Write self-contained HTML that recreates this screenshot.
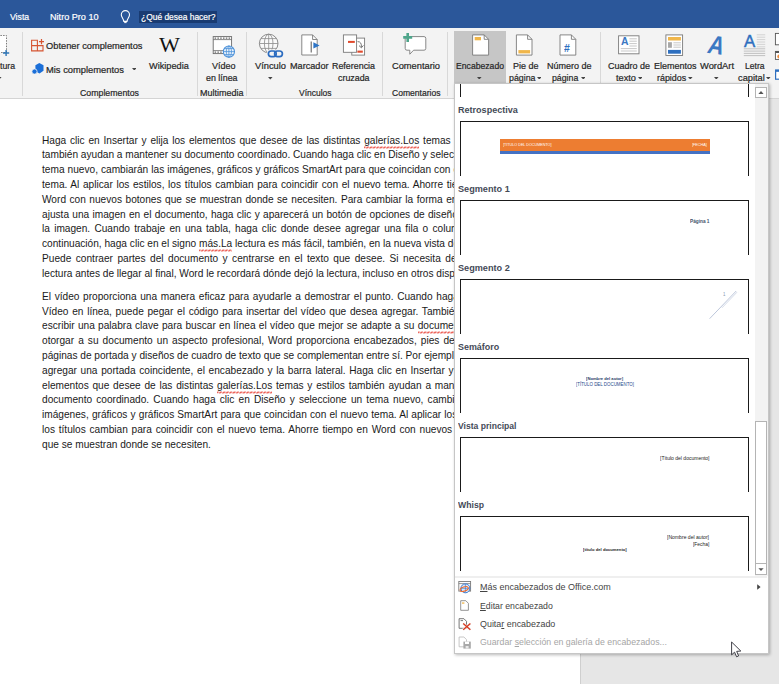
<!DOCTYPE html>
<html lang="es"><head><meta charset="utf-8"><title>Word</title>
<style>
html,body{margin:0;padding:0}
body{width:779px;height:684px;overflow:hidden;position:relative;background:#e6e6e6;font-family:"Liberation Sans",sans-serif}
.l{-webkit-text-stroke:0.2px currentColor;position:absolute;white-space:nowrap;line-height:12px;transform-origin:0 50%;display:block}
.abs{position:absolute}
#top{position:absolute;left:0;top:0;width:779px;height:28px;background:#2b579a}
#ribbon{position:absolute;left:0;top:28px;width:779px;height:70px;background:#f3f3f3;border-bottom:1px solid #d4d4d4}
.sep{position:absolute;width:1px;background:#d8d8d8;top:32px;height:64px}
#page{position:absolute;left:0;top:99px;width:580px;height:585px;background:#fff;border-right:1px solid #cfcfcf}
.ln{position:absolute;left:42px;white-space:nowrap;font-size:10.15px;line-height:14px;color:#1a1a1a;text-align:justify;text-align-last:justify;width:450px}
.ln.last{text-align:left;text-align-last:left}
.sq{position:relative;display:inline-block}.sq svg{position:absolute;left:0;top:12px;width:100%;height:3px;overflow:hidden}
#dd{position:absolute;left:454px;top:83px;width:313px;height:569px;background:#fff;border:1px solid #c6c6c6;box-shadow:1px 1px 3px rgba(0,0,0,.28)}
.it{position:absolute;left:5px;width:289px;height:55px;border:1px solid #1a1a1a;border-bottom:none;box-sizing:border-box}
.hd{position:absolute;left:4px;font-size:10.5px;font-weight:bold;color:#44546a;line-height:12px;white-space:nowrap;transform-origin:0 50%}
</style></head><body>

<svg width="0" height="0" style="position:absolute"><defs><pattern id="sqp" width="3.4" height="3" patternUnits="userSpaceOnUse"><path d="M0 2.5L0.85 0.5L2.55 2.5L3.4 0.5" fill="none" stroke="#e8392d" stroke-width="0.75"/></pattern></defs></svg>
<div id="top"></div>
<div class="abs" style="left:139px;top:11px;width:78px;height:12px;background:#193b72"></div>
<span class="l" style="left:10.2px;top:11.18px;font-size:9px;color:#ffffff;transform:scaleX(0.9625);">Vista</span>
<span class="l" style="left:50.0px;top:11.18px;font-size:9px;color:#ffffff;transform:scaleX(1.0122);">Nitro Pro 10</span>
<span class="l" style="left:140.5px;top:11.18px;font-size:9px;color:#ffffff;transform:scaleX(0.9366);">¿Qué desea hacer?</span>
<div id="ribbon"></div>
<div class="sep" style="left:22px"></div>
<div class="sep" style="left:197px"></div>
<div class="sep" style="left:246px"></div>
<div class="sep" style="left:382px"></div>
<div class="sep" style="left:447px"></div>
<div class="sep" style="left:600px"></div>
<div class="abs" style="left:454px;top:31px;width:52px;height:53px;background:#c6c6c6"></div>
<span class="l" style="left:-0.5px;top:59.58px;font-size:9px;color:#262626;transform:scaleX(0.9673);">tura</span>
<span class="l" style="left:46.0px;top:40.18px;font-size:9px;color:#262626;transform:scaleX(1.0316);">Obtener complementos</span>
<span class="l" style="left:46.0px;top:63.58px;font-size:9px;color:#262626;transform:scaleX(1.0397);">Mis complementos</span>
<span class="l" style="left:149.4px;top:59.88px;font-size:9px;color:#262626;transform:scaleX(1.0202);">Wikipedia</span>
<span class="l" style="left:80.0px;top:86.78px;font-size:9px;color:#262626;transform:scaleX(0.9748);">Complementos</span>
<span class="l" style="left:211.5px;top:59.58px;font-size:9px;color:#262626;transform:scaleX(0.9992);">Vídeo</span>
<span class="l" style="left:206.0px;top:71.98px;font-size:9px;color:#262626;transform:scaleX(0.9836);">en línea</span>
<span class="l" style="left:200.0px;top:86.78px;font-size:9px;color:#262626;transform:scaleX(0.9997);">Multimedia</span>
<span class="l" style="left:255.0px;top:59.58px;font-size:9px;color:#262626;transform:scaleX(1.0327);">Vínculo</span>
<span class="l" style="left:290.0px;top:59.58px;font-size:9px;color:#262626;transform:scaleX(1.0129);">Marcador</span>
<span class="l" style="left:332.0px;top:59.58px;font-size:9px;color:#262626;transform:scaleX(0.9880);">Referencia</span>
<span class="l" style="left:337.5px;top:71.98px;font-size:9px;color:#262626;transform:scaleX(0.9839);">cruzada</span>
<span class="l" style="left:298.5px;top:86.78px;font-size:9px;color:#262626;transform:scaleX(0.9415);">Vínculos</span>
<span class="l" style="left:391.5px;top:59.58px;font-size:9px;color:#262626;transform:scaleX(1.0319);">Comentario</span>
<span class="l" style="left:391.5px;top:86.78px;font-size:9px;color:#262626;transform:scaleX(0.9507);">Comentarios</span>
<span class="l" style="left:456.0px;top:59.58px;font-size:9px;color:#262626;transform:scaleX(0.9593);">Encabezado</span>
<span class="l" style="left:512.5px;top:59.58px;font-size:9px;color:#262626;transform:scaleX(0.9993);">Pie de</span>
<span class="l" style="left:508.5px;top:71.98px;font-size:9px;color:#262626;transform:scaleX(0.9806);">página</span>
<span class="l" style="left:546.5px;top:59.58px;font-size:9px;color:#262626;transform:scaleX(0.9996);">Número de</span>
<span class="l" style="left:552.0px;top:71.98px;font-size:9px;color:#262626;transform:scaleX(0.9732);">página</span>
<span class="l" style="left:608.0px;top:59.58px;font-size:9px;color:#262626;transform:scaleX(0.9994);">Cuadro de</span>
<span class="l" style="left:616.0px;top:71.98px;font-size:9px;color:#262626;transform:scaleX(1.0251);">texto</span>
<span class="l" style="left:653.5px;top:59.58px;font-size:9px;color:#262626;transform:scaleX(0.9995);">Elementos</span>
<span class="l" style="left:656.8px;top:71.98px;font-size:9px;color:#262626;transform:scaleX(0.9893);">rápidos</span>
<span class="l" style="left:700.0px;top:59.58px;font-size:9px;color:#262626;transform:scaleX(1.0354);">WordArt</span>
<span class="l" style="left:744.8px;top:59.58px;font-size:9px;color:#262626;transform:scaleX(0.9507);">Letra</span>
<span class="l" style="left:738.0px;top:71.98px;font-size:9px;color:#262626;transform:scaleX(1.0302);">capital</span>
<svg class="abs" style="left:0;top:0" width="779" height="100" viewBox="0 0 779 100" fill="none">
<rect x="-5" y="35.5" width="11.5" height="17" fill="#fff" stroke="#7a7a7a" stroke-width="1" stroke-dasharray="1.5 1.2"/>
<path d="M3 53H9.2M6.1 50V56" stroke="#2e75b6" stroke-width="1.4"/>
<path d="M31.6 40.2H37.4V50.9H31.6ZM31.6 45.6H43V50.9H37.4M43 45.6V50.9" stroke="#d65532" stroke-width="1.1"/>
<path d="M39 41.6H44M41.5 39V44.2" stroke="#d65532" stroke-width="1.2"/>
<path d="M39.3 63.1L43.5 65.2V70.8L39.5 73.4L35.4 71.3V65.3Z" fill="#1b6fd8"/>
<circle cx="34.5" cy="71.5" r="2.6" fill="#1b6fd8" stroke="#f3f3f3" stroke-width="0.8"/>
<rect x="213.2" y="36.6" width="18.4" height="17" fill="#fff" stroke="#6a6a6a" stroke-width="0.9"/>
<path d="M213.2 39.6H231.6M213.2 50.6H231.6" stroke="#6a6a6a" stroke-width="0.8"/>
<path d="M214.6 38.1H231M214.6 52.1H224" stroke="#6a6a6a" stroke-width="1.4" stroke-dasharray="1.5 1.3"/>
<circle cx="228.9" cy="51.6" r="5.6" fill="#eaf2fb" stroke="#4a90d9" stroke-width="1.1"/>
<path d="M223.3 51.6H234.5M228.9 46V57.2M224.3 48.6H233.5M224.3 54.6H233.5" stroke="#4a90d9" stroke-width="0.8"/>
<ellipse cx="228.9" cy="51.6" rx="2.6" ry="5.6" stroke="#4a90d9" stroke-width="0.8"/>
<circle cx="268.7" cy="43.5" r="9.3" fill="#fafafa" stroke="#8a8a8a" stroke-width="1"/>
<ellipse cx="268.7" cy="43.5" rx="4.3" ry="9.3" stroke="#8a8a8a" stroke-width="0.8"/>
<path d="M259.4 43.5H278M268.7 34.2V52.8M261 38.6H276.4M261 48.4H276.4" stroke="#8a8a8a" stroke-width="0.8"/>
<rect x="266.5" y="49.4" width="17.5" height="8.8" rx="4.4" fill="#f3f3f3"/>
<rect x="268.4" y="51" width="7.8" height="5.6" rx="2.8" stroke="#2b6cc0" stroke-width="1.7"/>
<rect x="274.6" y="51" width="7.8" height="5.6" rx="2.8" stroke="#2b6cc0" stroke-width="1.7"/>
<path d="M301.8 34.9H312.6L317.2 39.5V55H301.8Z" fill="#fff" stroke="#7a7a7a" stroke-width="0.9"/>
<path d="M312.6 34.9V39.5H317.2" stroke="#7a7a7a" stroke-width="0.9"/>
<path d="M311.2 41.5V52.5" stroke="#555" stroke-width="1"/>
<path d="M313.4 42.2L319.6 45.4L313.4 48.6Z" fill="#2e75c6"/>
<rect x="351.8" y="38.1" width="12.8" height="17" fill="#fff" stroke="#7a7a7a" stroke-width="0.9"/>
<rect x="343.4" y="34.9" width="13.2" height="17.4" fill="#fff" stroke="#7a7a7a" stroke-width="0.9"/>
<rect x="348" y="40.9" width="6.8" height="2" fill="#e0492b"/>
<rect x="357.4" y="50.6" width="5.4" height="2.1" fill="#e0492b"/>
<path d="M357.6 41.6C360.6 41.6 361.6 43.6 361.4 47.2M359 45.6L361.4 47.8L363.4 45.4" stroke="#666" stroke-width="0.9"/>
<path d="M407 36.6H424A1.8 1.8 0 0 1 425.8 38.4V48.4A1.8 1.8 0 0 1 424 50.2H413.6L409.8 54.2V50.2H407A1.8 1.8 0 0 1 405.2 48.4V38.4A1.8 1.8 0 0 1 407 36.6Z" fill="#fff" stroke="#7a7a7a" stroke-width="0.9"/>
<path d="M403.2 37.4H412.2M407.7 32.9V41.9" stroke="#4ea58a" stroke-width="2.6"/>
<path d="M472.6 34.9H484.20000000000005L488.6 39.3V55.1H472.6Z" fill="#fff" stroke="#7a7a7a" stroke-width="0.9"/><path d="M484.20000000000005 34.9V39.3H488.6" stroke="#7a7a7a" stroke-width="0.9"/>
<rect x="474.7" y="37" width="6.3" height="3.3" fill="#f0b64a"/>
<path d="M516.4 34.9H527.6L532 39.3V55.1H516.4Z" fill="#fff" stroke="#7a7a7a" stroke-width="0.9"/><path d="M527.6 34.9V39.3H532" stroke="#7a7a7a" stroke-width="0.9"/>
<rect x="518.4" y="50.1" width="11.7" height="3.3" fill="#f0b64a"/>
<path d="M560 34.9H571.4L575.8 39.3V55.1H560Z" fill="#fff" stroke="#7a7a7a" stroke-width="0.9"/><path d="M571.4 34.9V39.3H575.8" stroke="#7a7a7a" stroke-width="0.9"/>
<rect x="618.6" y="35.8" width="20.4" height="18" fill="#fff" stroke="#7a7a7a" stroke-width="0.9"/>
<path d="M629.4 38.8H636.8M629.4 41.2H636.8M629.4 43.6H636.8M629.4 46H636.8M620.8 48.6H636.8M620.8 51H636.8" stroke="#b9b9b9" stroke-width="0.8"/>
<rect x="665.9" y="34.9" width="16.7" height="20.6" fill="#fff" stroke="#7a7a7a" stroke-width="0.9"/>
<rect x="668" y="37" width="12.9" height="3.5" fill="#f0b64a"/>
<rect x="668" y="42.2" width="3.9" height="5.6" fill="#a8a8a8"/>
<path d="M673.4 42.8H680.9M673.4 45H680.9M673.4 47.2H680.9" stroke="#b9b9b9" stroke-width="0.8"/>
<rect x="668" y="49.9" width="12.9" height="3.8" fill="#2e6fbf"/>
<path d="M756.8 34.8H765.2M756.8 37.2H765.2M756.8 39.6H765.2M756.8 42H765.2M756.8 44.4H765.2M756.8 46.8H765.2" stroke="#cfcfcf" stroke-width="0.9"/>
<path d="M743.8 48.8H765.2M743.8 51.1H765.2M743.8 53.4H765.2M743.8 55.6H765.2" stroke="#b4b4b4" stroke-width="0.8"/>
<rect x="775.4" y="33.4" width="8" height="11.4" fill="#fff" stroke="#555" stroke-width="0.9"/>
<rect x="775.4" y="51.4" width="8" height="8" fill="#fff" stroke="#555" stroke-width="0.9"/>
<rect x="775.4" y="51" width="8" height="2" fill="#555"/>
<circle cx="779.3" cy="56.6" r="2" fill="#ee8a3a"/>
<rect x="775.6" y="70.6" width="8" height="8.6" fill="#fff" stroke="#2e6fbf" stroke-width="1.2"/>
<rect x="775" y="69.4" width="8" height="2.4" fill="#2e6fbf"/>
</svg>
<svg class="abs" style="left:118px;top:8px" width="16" height="18" viewBox="118 8 16 18" fill="none"><path d="M125.4 10.6A4.1 4.1 0 0 1 129.5 14.7C129.5 17 127.6 18.2 127 21.4H123.8C123.2 18.2 121.3 17 121.3 14.7A4.1 4.1 0 0 1 125.4 10.6Z" stroke="#fff" stroke-width="1.1"/><path d="M124.2 22.6H126.6" stroke="#fff" stroke-width="1"/></svg>
<span class="abs" style="left:563.6px;top:42px;font-size:11px;line-height:12px;font-weight:bold;color:#2e6fbf;transform:scale(.95,1);transform-origin:0 50%">#</span>
<span class="abs" style="left:621px;top:35.6px;font-size:10.4px;line-height:12px;font-weight:bold;color:#3b78c3">A</span>
<span class="abs" style="left:743.9px;top:33.2px;font-size:16.8px;line-height:18px;color:#2e6fbf;-webkit-text-stroke:0.45px #2e6fbf">A</span>
<span class="abs" style="left:706.5px;top:30.4px;font-size:26px;line-height:30px;font-style:italic;font-weight:bold;color:#3b78c3;transform:rotate(8deg) scale(.84,1);transform-origin:50% 50%">A</span>
<span class="abs" style="left:158.6px;top:33.2px;font-family:'Liberation Serif',serif;font-size:20.5px;line-height:24px;color:#111;transform:scaleX(1.08);transform-origin:0 50%">W</span>
<svg class="abs" style="left:131.5px;top:67.7px" width="4.6" height="2.6" viewBox="0 0 4.6 2.6"><path d="M0 0H4.6L2.3 2.6Z" fill="#444"/></svg>
<svg class="abs" style="left:268.2px;top:77.2px" width="4.6" height="2.6" viewBox="0 0 4.6 2.6"><path d="M0 0H4.6L2.3 2.6Z" fill="#444"/></svg>
<svg class="abs" style="left:-2.8px;top:76.5px" width="4.6" height="2.6" viewBox="0 0 4.6 2.6"><path d="M0 0H4.6L2.3 2.6Z" fill="#444"/></svg>
<svg class="abs" style="left:477.3px;top:76.7px" width="4.6" height="2.6" viewBox="0 0 4.6 2.6"><path d="M0 0H4.6L2.3 2.6Z" fill="#444"/></svg>
<svg class="abs" style="left:536.7px;top:76.9px" width="4.6" height="2.6" viewBox="0 0 4.6 2.6"><path d="M0 0H4.6L2.3 2.6Z" fill="#444"/></svg>
<svg class="abs" style="left:580.5px;top:76.9px" width="4.6" height="2.6" viewBox="0 0 4.6 2.6"><path d="M0 0H4.6L2.3 2.6Z" fill="#444"/></svg>
<svg class="abs" style="left:637.5px;top:76.9px" width="4.6" height="2.6" viewBox="0 0 4.6 2.6"><path d="M0 0H4.6L2.3 2.6Z" fill="#444"/></svg>
<svg class="abs" style="left:688.0px;top:76.9px" width="4.6" height="2.6" viewBox="0 0 4.6 2.6"><path d="M0 0H4.6L2.3 2.6Z" fill="#444"/></svg>
<svg class="abs" style="left:714.1px;top:76.9px" width="4.6" height="2.6" viewBox="0 0 4.6 2.6"><path d="M0 0H4.6L2.3 2.6Z" fill="#444"/></svg>
<svg class="abs" style="left:766.3px;top:76.9px" width="4.6" height="2.6" viewBox="0 0 4.6 2.6"><path d="M0 0H4.6L2.3 2.6Z" fill="#444"/></svg>
<div id="page"></div>
<div class="ln" style="top:133.60px">Haga clic en Insertar y elija los elementos que desee de las distintas <span class=sq>galerías.Los<svg><rect width='100%' height='3' fill='url(#sqp)'/></svg></span> temas y estilos</div>
<div class="ln" style="top:148.41px">también ayudan a mantener su documento coordinado. Cuando haga clic en Diseño y seleccione un</div>
<div class="ln" style="top:163.22px">tema nuevo, cambiarán las imágenes, gráficos y gráficos SmartArt para que coincidan con el nuevo</div>
<div class="ln" style="top:178.03px">tema. Al aplicar los estilos, los títulos cambian para coincidir con el nuevo tema. Ahorre tiempo en</div>
<div class="ln" style="top:192.84px">Word con nuevos botones que se muestran donde se necesiten. Para cambiar la forma en que se</div>
<div class="ln" style="top:207.65px">ajusta una imagen en el documento, haga clic y aparecerá un botón de opciones de diseño junto a</div>
<div class="ln" style="top:222.46px">la imagen. Cuando trabaje en una tabla, haga clic donde desee agregar una fila o columna y, a</div>
<div class="ln" style="top:237.27px">continuación, haga clic en el signo <span class=sq>más.La<svg><rect width='100%' height='3' fill='url(#sqp)'/></svg></span> lectura es más fácil, también, en la nueva vista de lectura.</div>
<div class="ln" style="top:252.08px">Puede contraer partes del documento y centrarse en el texto que desee. Si necesita detener la</div>
<div class="ln last" style="top:266.89px">lectura antes de llegar al final, Word le recordará dónde dejó la lectura, incluso en otros dispositivos.</div>
<div class="ln" style="top:289.70px">El vídeo proporciona una manera eficaz para ayudarle a demostrar el punto. Cuando haga clic en</div>
<div class="ln" style="top:304.51px">Vídeo en línea, puede pegar el código para insertar del vídeo que desea agregar. También puede</div>
<div class="ln" style="top:319.32px">escribir una palabra clave para buscar en línea el vídeo que mejor se adapte a su <span class=sq>documento.Para<svg><rect width='100%' height='3' fill='url(#sqp)'/></svg></span></div>
<div class="ln" style="top:334.13px">otorgar a su documento un aspecto profesional, Word proporciona encabezados, pies de página,</div>
<div class="ln" style="top:348.94px">páginas de portada y diseños de cuadro de texto que se complementan entre sí. Por ejemplo, puede</div>
<div class="ln" style="top:363.75px">agregar una portada coincidente, el encabezado y la barra lateral. Haga clic en Insertar y elija los</div>
<div class="ln" style="top:378.56px">elementos que desee de las distintas <span class=sq>galerías.Los<svg><rect width='100%' height='3' fill='url(#sqp)'/></svg></span> temas y estilos también ayudan a mantener su</div>
<div class="ln" style="top:393.37px">documento coordinado. Cuando haga clic en Diseño y seleccione un tema nuevo, cambiarán las</div>
<div class="ln" style="top:408.18px">imágenes, gráficos y gráficos SmartArt para que coincidan con el nuevo tema. Al aplicar los estilos,</div>
<div class="ln" style="top:422.99px">los títulos cambian para coincidir con el nuevo tema. Ahorre tiempo en Word con nuevos botones</div>
<div class="ln last" style="top:437.80px">que se muestran donde se necesiten.</div>
<div id="dd"></div>
<div class="abs" style="left:460px;top:84px;width:1px;height:13px;background:#1a1a1a"></div>
<div class="abs" style="left:748px;top:84px;width:1px;height:13px;background:#1a1a1a"></div>
<span class="l" style="left:457.8px;top:103.68px;font-size:9px;color:#444a57;font-weight:bold;transform:scaleX(1.0047);-webkit-text-stroke:0;">Retrospectiva</span>
<div class="abs" style="left:460px;top:121px;width:289px;height:55px;border:1px solid #1a1a1a;border-bottom:none;box-sizing:border-box"></div>
<span class="l" style="left:457.8px;top:182.68px;font-size:9px;color:#444a57;font-weight:bold;transform:scaleX(1.0135);-webkit-text-stroke:0;">Segmento 1</span>
<div class="abs" style="left:460px;top:200px;width:289px;height:55px;border:1px solid #1a1a1a;border-bottom:none;box-sizing:border-box"></div>
<span class="l" style="left:457.8px;top:261.68px;font-size:9px;color:#444a57;font-weight:bold;transform:scaleX(1.0135);-webkit-text-stroke:0;">Segmento 2</span>
<div class="abs" style="left:460px;top:279px;width:289px;height:55px;border:1px solid #1a1a1a;border-bottom:none;box-sizing:border-box"></div>
<span class="l" style="left:457.8px;top:340.68px;font-size:9px;color:#444a57;font-weight:bold;transform:scaleX(0.9925);-webkit-text-stroke:0;">Semáforo</span>
<div class="abs" style="left:460px;top:358px;width:289px;height:55px;border:1px solid #1a1a1a;border-bottom:none;box-sizing:border-box"></div>
<span class="l" style="left:457.8px;top:419.68px;font-size:9px;color:#444a57;font-weight:bold;transform:scaleX(0.9535);-webkit-text-stroke:0;">Vista principal</span>
<div class="abs" style="left:460px;top:437px;width:289px;height:55px;border:1px solid #1a1a1a;border-bottom:none;box-sizing:border-box"></div>
<span class="l" style="left:457.8px;top:498.68px;font-size:9px;color:#444a57;font-weight:bold;transform:scaleX(0.9632);-webkit-text-stroke:0;">Whisp</span>
<div class="abs" style="left:460px;top:516px;width:289px;height:55px;border:1px solid #1a1a1a;border-bottom:none;box-sizing:border-box"></div>
<div class="abs" style="left:500px;top:138.5px;width:209.5px;height:13px;background:#ed7d31"></div>
<div class="abs" style="left:500px;top:151.3px;width:209.5px;height:2.7px;background:#4472c4"></div>
<span class="l" style="left:502.6px;top:138.91px;font-size:4px;color:#fff;transform:scaleX(0.9247);-webkit-text-stroke:0;">[TÍTULO DEL DOCUMENTO]</span>
<span class="l" style="left:692.0px;top:138.91px;font-size:4px;color:#fff;transform:scaleX(0.9379);-webkit-text-stroke:0;">[FECHA]</span>
<span class="l" style="left:689.7px;top:215.47px;font-size:5px;color:#44546a;font-weight:bold;transform:scaleX(0.9483);-webkit-text-stroke:0;">Página 1</span>
<span class="l" style="left:723.0px;top:288.64px;font-size:4.5px;color:#8497b0;transform:scaleX(0.9591);-webkit-text-stroke:0;">1</span>
<svg class="abs" style="left:700px;top:285px" width="45" height="40" viewBox="700 285 45 40"><path d="M709.6 318.7L736.2 291" stroke="#b4c0d6" stroke-width="0.9"/><path d="M722 307.8L737 292.2" stroke="#c9d2e2" stroke-width="0.8"/></svg>
<span class="l" style="left:586.4px;top:373.28px;font-size:4.4px;color:#1f3864;font-weight:bold;transform:scaleX(0.9452);-webkit-text-stroke:0;">[Nombre del autor]</span>
<span class="l" style="left:576.0px;top:379.31px;font-size:4.6px;color:#27498c;transform:scaleX(0.9616);-webkit-text-stroke:0;">[TÍTULO DEL DOCUMENTO]</span>
<span class="l" style="left:659.8px;top:451.87px;font-size:5px;color:#222;transform:scaleX(1.0006);-webkit-text-stroke:0;">[Título del documento]</span>
<span class="l" style="left:667.3px;top:530.87px;font-size:5px;color:#222;transform:scaleX(1.0144);-webkit-text-stroke:0;">[Nombre del autor]</span>
<span class="l" style="left:693.0px;top:537.87px;font-size:5px;color:#222;transform:scaleX(0.9776);-webkit-text-stroke:0;">[Fecha]</span>
<span class="l" style="left:583.0px;top:544.38px;font-size:4.4px;color:#222;font-weight:bold;transform:scaleX(0.9483);-webkit-text-stroke:0;">[título del documento]</span>
<div class="abs" style="left:755px;top:84px;width:13px;height:492px;background:#f3f3f3"></div>
<div class="abs" style="left:755px;top:87px;width:12px;height:11px;border:1px solid #b4b4b4;box-sizing:border-box;background:#fff"></div>
<div class="abs" style="left:755px;top:421px;width:12px;height:143px;border:1px solid #b4b4b4;box-sizing:border-box;background:#fff"></div>
<div class="abs" style="left:755px;top:563px;width:12px;height:12px;border:1px solid #b4b4b4;box-sizing:border-box;background:#fff"></div>
<svg class="abs" style="left:755px;top:87px" width="12" height="11" viewBox="0 0 12 11"><path d="M3.4 6.9L6 4.1L8.6 6.9Z" fill="#555"/></svg>
<svg class="abs" style="left:755px;top:563px" width="12" height="12" viewBox="0 0 12 12"><path d="M3.4 5.2H8.6L6 8Z" fill="#555"/></svg>
<div class="abs" style="left:455px;top:576px;width:312px;height:2px;background:#efefef"></div>
<span class="l" style="left:480.2px;top:581.38px;font-size:9px;color:#444;transform:scaleX(0.9993);-webkit-text-stroke:0;"><u>M</u>ás encabezados de Office.com</span>
<span class="l" style="left:480.2px;top:599.78px;font-size:9px;color:#444;transform:scaleX(0.9700);-webkit-text-stroke:0;"><u>E</u>ditar encabezado</span>
<span class="l" style="left:480.2px;top:618.18px;font-size:9px;color:#444;transform:scaleX(0.9902);-webkit-text-stroke:0;">Quita<u>r</u> encabezado</span>
<span class="l" style="left:480.2px;top:636.18px;font-size:9px;color:#a6a6a6;transform:scaleX(0.9749);-webkit-text-stroke:0;">Guardar <u>s</u>elección en galería de encabezados...</span>
<svg class="abs" style="left:450px;top:575px" width="40" height="80" viewBox="450 575 40 80" fill="none">
<rect x="458.8" y="581.5" width="11.8" height="9.6" fill="#fff" stroke="#7a7a7a" stroke-width="0.9"/>
<path d="M458.8 583.6H470.6" stroke="#7a7a7a" stroke-width="0.8"/>
<circle cx="465.4" cy="588.3" r="4.5" fill="#dbe8f8" stroke="#3d7cd0" stroke-width="1"/>
<path d="M461 588.3H469.8M465.4 584V592.6" stroke="#3d7cd0" stroke-width="0.7"/>
<ellipse cx="464.2" cy="589" rx="4.2" ry="2.1" transform="rotate(-18 464.2 589)" stroke="#ee6a2c" stroke-width="1.1"/>
<path d="M460.7 600.7H465.8L468.4 603.3V610.3H460.7Z" fill="#fff" stroke="#7a7a7a" stroke-width="0.8"/>
<rect x="462" y="602.4" width="2.4" height="1.3" fill="#f0b64a"/>
<path d="M459.1 618.7H463.9L466.5 621.3V628.3H459.1Z" fill="#fff" stroke="#555" stroke-width="0.8"/>
<path d="M460.6 620.6H463" stroke="#555" stroke-width="0.8"/>
<path d="M463.2 623.6L470.4 629.8M470.4 623.6L463.2 629.8" stroke="#f3f3f3" stroke-width="2.6"/>
<path d="M463.2 623.6L470.4 629.8M470.4 623.6L463.2 629.8" stroke="#d8381e" stroke-width="1.3"/>
<path d="M459.1 637H463.9L466.5 639.6V646.8H459.1Z" fill="#fff" stroke="#b8b8b8" stroke-width="0.8"/>
<rect x="463.4" y="641.6" width="7.4" height="7" fill="#a9a9a9"/>
<rect x="465" y="641.6" width="4" height="2.4" fill="#fff"/>
<rect x="465.6" y="646" width="3" height="2.6" fill="#e8e8e8"/>
</svg>
<svg class="abs" style="left:756px;top:583px" width="6" height="8" viewBox="0 0 6 8"><path d="M1.2 1.2L4.6 4L1.2 6.8Z" fill="#444"/></svg>
<svg class="abs" style="left:728px;top:638px" width="18" height="22" viewBox="728 638 18 22"><path d="M731.6 642V654.8L734.6 652.2L736.6 656.8L738.6 655.9L736.7 651.4L740.8 651Z" fill="#fff" stroke="#2a2a33" stroke-width="0.9" stroke-linejoin="round"/></svg>
</body></html>
